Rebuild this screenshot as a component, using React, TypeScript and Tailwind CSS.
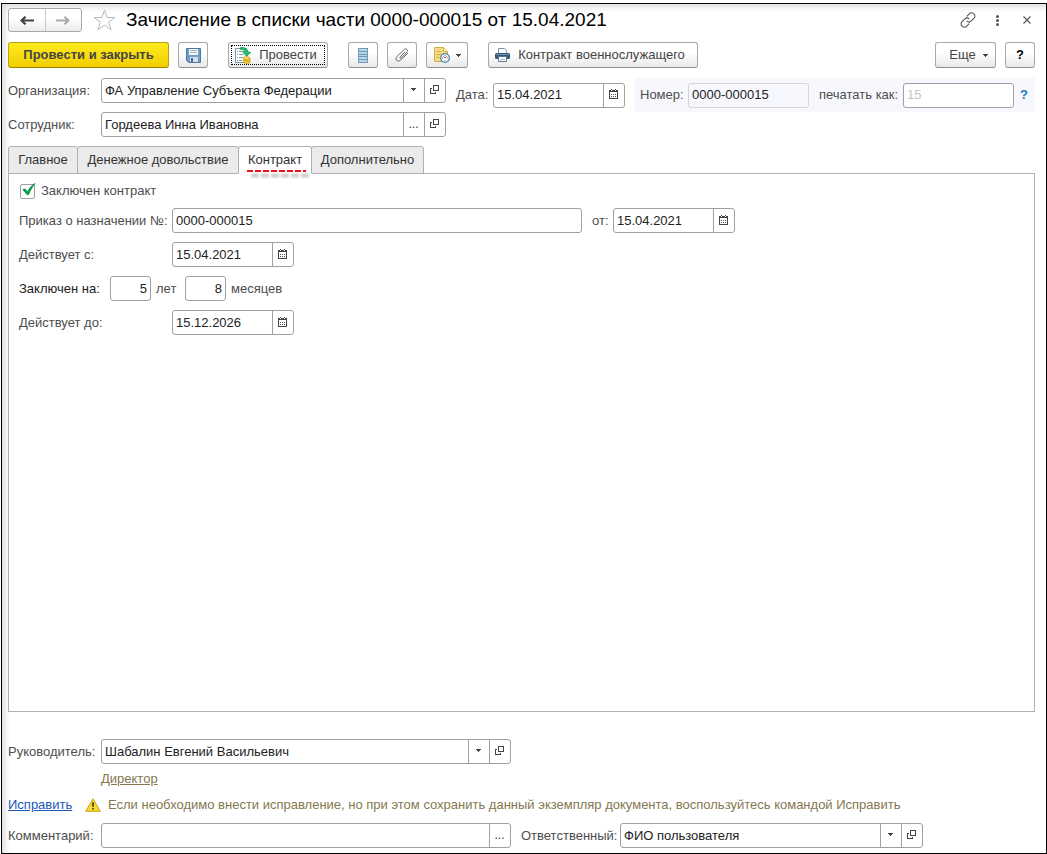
import type { ReactNode } from "react";
import clsx from "clsx";

const toolButton =
  "flex h-[26px] shrink-0 items-center justify-center rounded-[3px] border border-[#a9a9a9] border-b-[#8f8f8f] bg-linear-to-b from-white from-40% to-[#e8e8e8] text-[13px] whitespace-nowrap text-[#444]";

function CalendarIcon() {
  return (
    <svg width="9" height="10" viewBox="0 0 9 10" shapeRendering="crispEdges">
      <path d="M2 0h1v1h-1zM6 0h1v1h-1zM0 1h2v1h1v-1h3v1h1v-1h2v2h-9zM0 3h1v6h-1zM8 3h1v6h-1zM0 9h9v1h-9z" fill="#444" />
      <path d="M2 5h1v1h-1zM4 5h1v1h-1zM6 5h1v1h-1zM2 7h1v1h-1zM4 7h1v1h-1zM6 7h1v1h-1z" fill="#555" />
    </svg>
  );
}

function OpenIcon() {
  return (
    <svg width="9" height="9" viewBox="0 0 9 9" fill="none" stroke="#444" shapeRendering="crispEdges">
      <path d="M3.5 0.5h5v5h-5z" />
      <path d="M2 3.5h-1.5v5h5v-2" />
    </svg>
  );
}

function ArrowDown() {
  return (
    <svg width="5" height="3" viewBox="0 0 5 3" shapeRendering="crispEdges">
      <path d="M0 0h5v1h-1v1h-1v1h-1v-1h-1v-1h-1z" fill="#444" />
    </svg>
  );
}

const cellIcons = {
  calendar: { label: "Выбрать дату", icon: <CalendarIcon /> },
  open: { label: "Открыть", icon: <OpenIcon /> },
  list: { label: "Показать список", icon: <ArrowDown /> },
  dots: { label: "Выбрать", icon: <span className="text-xs leading-3">...</span> },
};

interface FieldProps {
  id: string;
  value?: string;
  className: string;
  inputClassName?: string;
  cells?: (keyof typeof cellIcons)[];
  disabled?: boolean;
}

function Field({ id, value = "", className, inputClassName, cells = [], disabled }: FieldProps) {
  return (
    <div
      className={clsx(
        "flex h-[25px] shrink-0 overflow-hidden rounded-[3px] border",
        className,
        disabled ? "border-[#d5d5da]" : "border-[#a0a0a0] bg-white"
      )}
    >
      <input
        id={id}
        defaultValue={value}
        readOnly={disabled}
        className={clsx("w-full min-w-0 flex-1 px-[3px] outline-none", inputClassName ?? "text-[#222]")}
      />
      {cells.map((cell) => (
        <button
          key={cell}
          type="button"
          aria-label={cellIcons[cell].label}
          className="flex w-[21px] shrink-0 items-center justify-center border-l border-[#a0a0a0] pr-px pb-[2px] text-[#333]"
        >
          {cellIcons[cell].icon}
        </button>
      ))}
    </div>
  );
}

function Label({ id, className, children }: { id: string; className?: string; children: ReactNode }) {
  return (
    <label htmlFor={id} className={clsx("shrink-0 whitespace-nowrap", className)}>
      {children}
    </label>
  );
}

function TitleBar() {
  return (
    <header className="flex h-6 items-center">
      <div className="flex h-6 w-[74px] rounded-[3px] border border-[#a9a9a9] bg-linear-to-b from-white from-40% to-[#ececec]">
        <button type="button" aria-label="Назад" className="flex flex-1 items-center justify-center border-r border-[#c8c8c8]">
          <svg width="14" height="9" viewBox="0 0 14 9" fill="none" stroke="#444" strokeWidth="2.2">
            <path d="M14 4.5H2M5.5 0.7L1.6 4.5L5.5 8.3" />
          </svg>
        </button>
        <button type="button" aria-label="Вперед" className="flex flex-1 items-center justify-center">
          <svg width="14" height="9" viewBox="0 0 14 9" fill="none" stroke="#aaa" strokeWidth="2">
            <path d="M0 4.5H12M8.5 0.7L12.4 4.5L8.5 8.3" />
          </svg>
        </button>
      </div>
      <button type="button" aria-label="Добавить в избранное" className="ml-[11px]">
        <svg width="23" height="22" viewBox="0 0 23 22" fill="#fff" stroke="#b4bbc3">
          <path d="M11.5 1.2L14.1 8.5H22L15.7 13.1L18.1 20.8L11.5 16.1L4.9 20.8L7.3 13.1L1 8.5H8.9Z" />
        </svg>
      </button>
      <h1 className="ml-[10px] text-[19px] leading-6 whitespace-nowrap text-black">
        Зачисление в списки части 0000-000015 от 15.04.2021
      </h1>
      <div className="ml-auto flex items-center">
        <button type="button" aria-label="Получить ссылку">
          <svg width="16" height="16" viewBox="0 0 16 16" fill="none" stroke="#555" strokeWidth="1.1" strokeLinecap="round">
            <path d="M7 4.2L9.3 1.8C10.6 0.5 12.5 0.4 13.9 1.8C15.3 3.1 15.2 5.1 13.9 6.4L11 9.2C9.7 10.4 8.2 10.4 7 9.2" />
            <path d="M9 11.8L6.7 14.2C5.4 15.5 3.5 15.6 2.1 14.2C0.7 12.9 0.8 10.9 2.1 9.6L5 6.8C6.3 5.6 7.8 5.6 9 6.8" />
          </svg>
        </button>
        <button type="button" aria-label="Меню" className="ml-5">
          <svg width="3" height="11" viewBox="0 0 3 11" fill="#555">
            <circle cx="1.5" cy="1.5" r="1.5" />
            <circle cx="1.5" cy="5.5" r="1.5" />
            <circle cx="1.5" cy="9.5" r="1.5" />
          </svg>
        </button>
        <button type="button" aria-label="Закрыть" className="mr-1 ml-6">
          <svg width="8" height="8" viewBox="0 0 8 8" stroke="#555" strokeWidth="1.1">
            <path d="M0.5 0.5L7.5 7.5M7.5 0.5L0.5 7.5" />
          </svg>
        </button>
      </div>
    </header>
  );
}

function Toolbar() {
  return (
    <div className="mt-[10px] flex">
      <button
        type="button"
        className="h-[26px] w-[161px] shrink-0 rounded-[3px] border border-[#b5a11c] border-b-[#9c8500] bg-linear-to-b from-[#ffea1a] to-[#f2cf00] text-[13px] leading-5 font-bold text-[#444]"
      >
        Провести и закрыть
      </button>
      <button type="button" aria-label="Записать" className={clsx(toolButton, "ml-[9px] w-[30px]")}>
        <svg width="15" height="15" viewBox="0 0 15 15">
          <path d="M0.5 0.5h14v14h-12l-2-2z" fill="#6f9fc8" stroke="#4a78a3" />
          <path d="M3 1h9v6h-9z" fill="#f4f8fb" />
          <path d="M4 2.5h7M4 4.5h7" stroke="#9fb6ca" />
          <path d="M4 9h8v5h-8z" fill="#d5dee6" />
          <path d="M5 10h2v4h-2z" fill="#3f6f9c" />
        </svg>
      </button>
      <button type="button" className={clsx(toolButton, "ml-5 w-[100px] px-[2px] py-[2px]")}>
        <span className="flex h-5 flex-1 items-center justify-center gap-2 border border-dotted border-black pr-1">
          <svg width="16" height="17" viewBox="0 0 16 17">
            <path d="M0.5 1.5h11v14h-11z" fill="#fff" stroke="#8495a3" />
            <path d="M2 4.5h1M4 4.5h5M2 7.5h1M4 7.5h4M2 10.5h1M4 10.5h4M2 13.5h1M4 13.5h3" stroke="#8495a3" />
            <path d="M5.5 0.7C9.5 0.2 12.9 1.6 13 5.2H15.6L11.7 9.3L7.8 5.2H10.2C10.1 3.3 8.5 2.3 5.5 2.6Z" fill="#20c070" stroke="#0b9652" strokeWidth="0.8" />
            <path d="M8.5 11v4c0 2 6.5 2 6.5 0v-4z" fill="#f0cb35" stroke="#c79a16" strokeWidth="0.7" />
            <ellipse cx="11.7" cy="11" rx="3.2" ry="1.3" fill="#ffe57a" stroke="#c79a16" strokeWidth="0.7" />
            <path d="M8.5 13.2c1 1 5.5 1 6.5 0" fill="none" stroke="#c79a16" strokeWidth="0.7" />
          </svg>
          Провести
        </span>
      </button>
      <button type="button" aria-label="Движения документа" className={clsx(toolButton, "ml-5 w-[30px]")}>
        <svg width="10" height="15" viewBox="0 0 10 15" shapeRendering="crispEdges">
          <path d="M0 0h10v15h-10z" fill="#6f9bb9" />
          <path d="M1 1h8v2h-8zM1 4h8v2h-8zM1 7h8v1h-8zM1 9h8v2h-8zM1 12h8v2h-8z" fill="#b9d5e8" />
        </svg>
      </button>
      <button type="button" aria-label="Присоединенные файлы" className={clsx(toolButton, "ml-[9px] w-[30px]")}>
        <svg width="14" height="14" viewBox="0 0 14 14" fill="none" stroke="#666" strokeLinecap="round">
          <path d="M9.800 4L5.300 8.800C4.300 9.900 5.400 10.800 6.400 9.800L11.700 4.600C13.900 2.300 11.300 -0.500 8.800 1.800L2.200 8.300C-0.800 11.500 2.500 14.800 5.600 12L12.600 5.400" />
        </svg>
      </button>
      <button type="button" aria-label="Создать напоминание" className={clsx(toolButton, "ml-[9px] w-[42px] gap-[6px] pl-[1px]")}>
        <svg width="16" height="16" viewBox="0 0 16 16">
          <path d="M0.5 0.5h9l4 4v10h-13z" fill="#f7dc85" stroke="#d5ad45" />
          <path d="M9.5 0.5v4h4" fill="#fff2c0" stroke="#d5ad45" />
          <path d="M2.5 4.5h5M2.5 7.5h5M2.5 10.5h3" stroke="#d5ad45" />
          <circle cx="11" cy="11" r="4.3" fill="#fff" stroke="#4a83b5" strokeWidth="1.3" />
          <path d="M11 8v1M11 13v1M8 11h1M13 11h1" stroke="#4a83b5" />
          <path d="M11 11L9.2 9.2M11 11L12.8 9.2" stroke="#d4463c" />
        </svg>
        <ArrowDown />
      </button>
      <button type="button" className={clsx(toolButton, "ml-5 w-[210px] gap-2 pr-[6px]")}>
        <svg width="15" height="14" viewBox="0 0 15 14">
          <path d="M3.5 5v-4.5h6l2 2v2.5" fill="#fff" stroke="#7d93a8" />
          <rect x="0" y="5" width="15" height="6" rx="1.5" fill="#34597c" />
          <path d="M1 6.5h13" stroke="#6d93b5" />
          <path d="M3.5 8.5h8v5h-8z" fill="#fff" stroke="#5a7690" />
          <path d="M5 11.5h5" stroke="#a5b5c3" />
        </svg>
        Контракт военнослужащего
      </button>
      <button type="button" className={clsx(toolButton, "ml-auto w-[61px] gap-[7px] pl-[6px]")}>
        Еще
        <ArrowDown />
      </button>
      <button type="button" aria-label="Справка" className={clsx(toolButton, "ml-[9px] w-[30px] font-bold text-black")}>
        ?
      </button>
    </div>
  );
}

function DocumentHeader() {
  return (
    <div className="mt-[10px] flex">
      <div className="flex shrink-0 flex-col gap-[9px]">
        <div className="flex items-center">
          <Label id="organization" className="w-[93px]">Организация:</Label>
          <Field id="organization" value="ФА Управление Субъекта Федерации" className="w-[345px]" cells={["list", "open"]} />
        </div>
        <div className="flex items-center">
          <Label id="employee" className="w-[93px]">Сотрудник:</Label>
          <Field id="employee" value="Гордеева Инна Ивановна" className="w-[345px]" cells={["dots", "open"]} />
        </div>
      </div>
      <div className="ml-[10px] flex h-[34px] flex-1 items-center">
        <Label id="date" className="w-[37px]">Дата:</Label>
        <Field id="date" value="15.04.2021" className="w-[132px]" cells={["calendar"]} />
        <div className="ml-[10px] flex h-[34px] flex-1 items-center bg-[#f7f8fe] pl-[5px]">
          <Label id="number" className="w-[48px]">Номер:</Label>
          <Field id="number" value="0000-000015" className="w-[121px]" disabled />
          <Label id="print-as" className="ml-[10px] w-[84px]">печатать как:</Label>
          <Field id="print-as" value="15" className="w-[111px]" inputClassName="text-[#c4c4c4]" />
          <button type="button" aria-label="Подсказка" className="ml-[6px] font-bold text-[#1a79c0]">?</button>
        </div>
      </div>
    </div>
  );
}

const tabs = [
  { title: "Главное", width: "w-[70px]" },
  { title: "Денежное довольствие", width: "w-[162px]" },
  { title: "Контракт", width: "w-[74px]", active: true },
  { title: "Дополнительно", width: "w-[113px]" },
];

function Tabs() {
  return (
    <div role="tablist" className="z-10 mt-[9px] -mb-px flex">
      {tabs.map((tab) => (
        <button
          key={tab.title}
          type="button"
          role="tab"
          aria-selected={!!tab.active}
          className={clsx(
            "relative -mr-px h-7 shrink-0 rounded-t-[3px] border border-[#b0b0b0] text-[#333]",
            tab.width,
            tab.active ? "z-10 border-b-white bg-white" : "bg-[#ebebeb]"
          )}
        >
          {tab.title}
          {tab.active && (
            <svg width="66" height="10" viewBox="0 0 66 10" className="absolute top-[22px] left-[7px]">
              <path d="M5 6.5H65" stroke="#000" strokeOpacity="0.2" strokeWidth="4" strokeDasharray="8 2" className="blur-[1px]" />
              <path d="M1 2H60" stroke="#f2101c" strokeWidth="2" strokeDasharray="6 2" />
            </svg>
          )}
        </button>
      ))}
    </div>
  );
}

function ContractPanel() {
  return (
    <section role="tabpanel" className="flex flex-1 flex-col gap-[9px] border border-[#b0b0b0] pt-[9px] pl-[10px]">
      <div className="flex h-4 items-center pl-px">
        <span className="relative flex">
          <input
            id="contract"
            type="checkbox"
            defaultChecked
            className="peer size-[15px] appearance-none rounded-[2px] border border-[#a0a0a0] bg-white"
          />
          <svg
            width="14"
            height="13"
            viewBox="0 0 14 13"
            className="pointer-events-none absolute -top-px left-[2px] hidden peer-checked:block"
          >
            <path
              d="M1 6.5L3 6L5.5 9C7.5 5 9.500 2.500 13 0.500C10.500 3.500 8.500 7 6.500 11.500H5Z"
              fill="#0c9a4b"
              stroke="#0c9a4b"
              strokeLinejoin="round"
            />
          </svg>
        </span>
        <Label id="contract" className="ml-[6px]">Заключен контракт</Label>
      </div>
      <div className="flex items-center">
        <Label id="order" className="w-[153px]">Приказ о назначении №:</Label>
        <Field id="order" value="0000-000015" className="w-[410px]" />
        <Label id="order-date" className="ml-[10px] w-[21px]">от:</Label>
        <Field id="order-date" value="15.04.2021" className="w-[122px]" cells={["calendar"]} />
      </div>
      <div className="flex items-center">
        <Label id="valid-from" className="w-[153px]">Действует с:</Label>
        <Field id="valid-from" value="15.04.2021" className="w-[122px]" cells={["calendar"]} />
      </div>
      <div className="flex items-center">
        <Label id="years" className="w-[91px] text-[#222]">Заключен на:</Label>
        <Field id="years" value="5" className="w-[41px]" inputClassName="text-right text-[#222]" />
        <Label id="years" className="ml-[5px] w-[29px]">лет</Label>
        <Field id="months" value="8" className="w-[41px]" inputClassName="text-right text-[#222]" />
        <Label id="months" className="ml-[5px]">месяцев</Label>
      </div>
      <div className="flex items-center">
        <Label id="valid-to" className="w-[153px]">Действует до:</Label>
        <Field id="valid-to" value="15.12.2026" className="w-[122px]" cells={["calendar"]} />
      </div>
    </section>
  );
}

function DocumentFooter() {
  return (
    <footer className="mt-[27px] mb-[5px]">
      <div className="flex items-center">
        <Label id="chief" className="w-[93px]">Руководитель:</Label>
        <Field id="chief" value="Шабалин Евгений Васильевич" className="w-[410px]" cells={["list", "open"]} />
      </div>
      <a href="#position" className="mt-[7px] ml-[93px] block w-fit leading-4 text-[#857750] underline">
        Директор
      </a>
      <div className="mt-[10px] flex h-4 items-center">
        <a href="#fix" className="w-[77px] text-[#1c55b8] underline">Исправить</a>
        <svg width="16" height="14" viewBox="0 0 16 14">
          <path d="M8 0.8L15.3 13.3H0.7Z" fill="#f7d92f" stroke="#c8a415" strokeLinejoin="round" />
          <path d="M7 4.5h2l-0.4 4.5h-1.2zM7.2 10h1.6v1.6h-1.6z" fill="#3a3416" />
        </svg>
        <p className="ml-[7px] whitespace-nowrap text-[#857750]">
          Если необходимо внести исправление, но при этом сохранить данный экземпляр документа, воспользуйтесь командой Исправить
        </p>
      </div>
      <div className="mt-[10px] flex items-center">
        <Label id="comment" className="w-[93px]">Комментарий:</Label>
        <Field id="comment" className="w-[410px]" cells={["dots"]} />
        <Label id="responsible" className="ml-[10px] w-[99px]">Ответственный:</Label>
        <Field id="responsible" value="ФИО пользователя" className="w-[303px]" cells={["list", "open"]} />
      </div>
    </footer>
  );
}

export default function App() {
  return (
    <div className="flex min-h-screen bg-white pt-[3px] pl-px font-['Liberation_Sans',Arial,sans-serif] text-[13px] leading-4 text-[#4d4d4d]">
      <main className="flex min-w-0 flex-1 flex-col border border-black pt-1 pr-[11px] pl-[6px] shadow-[inset_6px_6px_6px_-3px_#dcdcdc]">
        <TitleBar />
        <Toolbar />
        <DocumentHeader />
        <Tabs />
        <ContractPanel />
        <DocumentFooter />
      </main>
    </div>
  );
}
